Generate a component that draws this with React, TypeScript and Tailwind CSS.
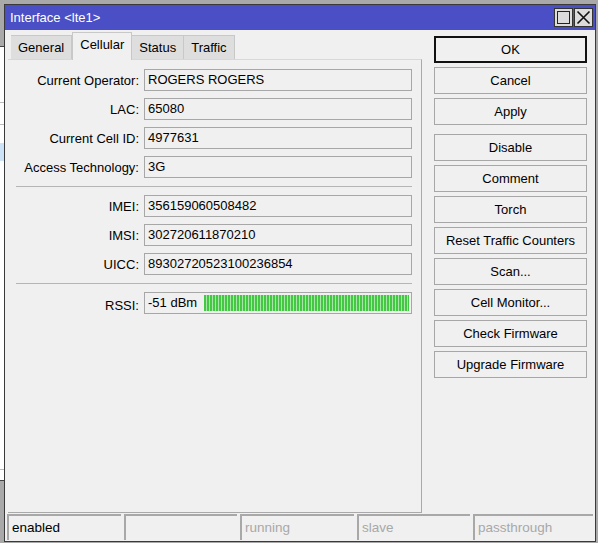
import { useState } from 'react';

const fields1 = [
  { label: 'Current Operator:', value: 'ROGERS ROGERS' },
  { label: 'LAC:', value: '65080' },
  { label: 'Current Cell ID:', value: '4977631' },
  { label: 'Access Technology:', value: '3G' },
];

const fields2 = [
  { label: 'IMEI:', value: '356159060508482' },
  { label: 'IMSI:', value: '302720611870210' },
  { label: 'UICC:', value: '89302720523100236854' },
];

const tabs = ['General', 'Cellular', 'Status', 'Traffic'];

function Field({ label, value }: { label: string; value: string }) {
  return (
    <div className="flex items-center h-[22px]">
      <div className="w-[136px] text-right pr-[5px] text-[13px] leading-none pt-[1px]">{label}</div>
      <div className="w-[268px] h-[22px] border border-[#a7a7a7] bg-[#f0f0f0] px-[3px] flex items-center text-[13px]">
        {value}
      </div>
    </div>
  );
}

function Btn({ children, primary }: { children: string; primary?: boolean }) {
  return (
    <button
      className={`w-[153px] h-[27px] text-[13px] bg-[#f0f0f0] flex items-center justify-center ${
        primary ? 'border-2 border-[#111]' : 'border border-[#a7a7a7]'
      }`}
    >
      {children}
    </button>
  );
}

function StatusCell({ text, dim, w }: { text: string; dim?: boolean; w: string }) {
  return (
    <div className={`${w} h-[26px] border-t-2 border-l-2 border-[#a8a8a8] flex items-center pl-[3px] text-[13.5px] ${dim ? 'text-[#a8a8a8]' : 'text-black'}`}>
      {text}
    </div>
  );
}

export default function App() {
  const [tab, setTab] = useState('Cellular');

  return (
    <div
      className="relative w-[598px] h-[543px] overflow-hidden bg-[#a9a9a9] text-black"
      style={{ fontFamily: '"Liberation Sans", Arial, sans-serif' }}
    >
      {/* window behind, peeking at the left edge */}
      <div className="absolute left-0 top-[46px] w-[4px] h-[435px] bg-white flex flex-col">
        <div className="h-px bg-[#444]" />
        <div className="h-[55px]" />
        <div className="h-px bg-[#bbb]" />
        <div className="h-[21px]" />
        <div className="h-px bg-[#bbb]" />
        <div className="h-[18px]" />
        <div className="h-[18px] bg-[#cde3f7]" />
        <div className="flex-1" />
        <div className="h-px bg-[#bbb]" />
        <div className="h-[10px]" />
        <div className="h-px bg-[#444]" />
      </div>

      {/* dialog window */}
      <div className="absolute left-[4px] top-[4px] w-[592px] h-[538px] border border-[#3a3a3a] bg-[#f0f0f0] flex flex-col">
        <div className="h-[25px] bg-[#4a4fc6] flex items-center justify-between pl-[5px] pr-[2px]">
          <span className="text-white text-[13px] pt-px">Interface &lt;lte1&gt;</span>
          <div className="flex gap-[1px]">
            <div className="w-[19px] h-[19px] bg-[#dcdcdc] border border-[#333] flex items-center justify-center">
              <div className="w-[13px] h-[13px] border border-[#222]" />
            </div>
            <div className="w-[19px] h-[19px] bg-[#dcdcdc] border border-[#333] flex items-center justify-center">
              <svg width="15" height="15" viewBox="0 0 15 15">
                <path d="M1.5 1.5L13.5 13.5M13.5 1.5L1.5 13.5" stroke="#111" strokeWidth="1.6" />
              </svg>
            </div>
          </div>
        </div>

        <div className="flex flex-1">
          {/* left column: tabs + panel */}
          <div className="ml-[3px] w-[414px] flex flex-col">
            <div className="flex items-end h-[29px] pl-[3px]">
              {tabs.map((t) => {
                const active = t === tab;
                return (
                  <div
                    key={t}
                    onClick={() => setTab(t)}
                    className={`flex items-center text-[13px] border-[#c8c8c8] ${
                      active
                        ? 'h-[28px] bg-[#f0f0f0] border-t border-x pb-[3px] relative top-px px-[7px]'
                        : 'h-[24px] bg-[#dedede] border-t border-r pt-[1px] px-[7px]'
                    }`}
                  >
                    {t}
                  </div>
                );
              })}
            </div>
            <div className="flex-1 border-t border-r border-b border-[#a9a9a9] border-t-[#d8d8d8] pt-[9px] flex flex-col">
              <div className="flex flex-col gap-[7px]">
                {fields1.map((f) => (
                  <Field key={f.label} {...f} />
                ))}
              </div>
              <div className="ml-[8px] w-[396px] h-px bg-[#b5b5b5] my-[8px]" />
              <div className="flex flex-col gap-[7px]">
                {fields2.map((f) => (
                  <Field key={f.label} {...f} />
                ))}
              </div>
              <div className="ml-[8px] w-[396px] h-px bg-[#b5b5b5] my-[8px]" />
              <div className="flex items-center h-[22px]">
                <div className="w-[136px] text-right pr-[5px] text-[13px] leading-none pt-[5px]">RSSI:</div>
                <div className="w-[268px] h-[22px] border border-[#a7a7a7] bg-[#f0f0f0] pl-[3px] pr-[2px] flex items-center gap-[7px] text-[13px]">
                  <span>-51 dBm</span>
                  <div className="flex-1 h-[16px] bg-[repeating-linear-gradient(90deg,#44c844_0px,#44c844_2px,#a9e6a9_2px,#a9e6a9_3px)]" />
                </div>
              </div>
            </div>
          </div>

          {/* right column: buttons */}
          <div className="ml-[12px] pt-[6px] flex flex-col gap-[4px]">
            <Btn primary>OK</Btn>
            <Btn>Cancel</Btn>
            <Btn>Apply</Btn>
            <div className="h-px" />
            <Btn>Disable</Btn>
            <Btn>Comment</Btn>
            <Btn>Torch</Btn>
            <Btn>Reset Traffic Counters</Btn>
            <Btn>Scan...</Btn>
            <Btn>Cell Monitor...</Btn>
            <Btn>Check Firmware</Btn>
            <Btn>Upgrade Firmware</Btn>
          </div>
        </div>

        <div className="mt-px mb-px flex gap-[3px] pl-[2px]">
          <StatusCell text="enabled" w="w-[114px]" />
          <StatusCell text="" w="w-[113px]" />
          <StatusCell text="running" dim w="w-[114px]" />
          <StatusCell text="slave" dim w="w-[113px]" />
          <StatusCell text="passthrough" dim w="w-[120px]" />
        </div>
      </div>
    </div>
  );
}
